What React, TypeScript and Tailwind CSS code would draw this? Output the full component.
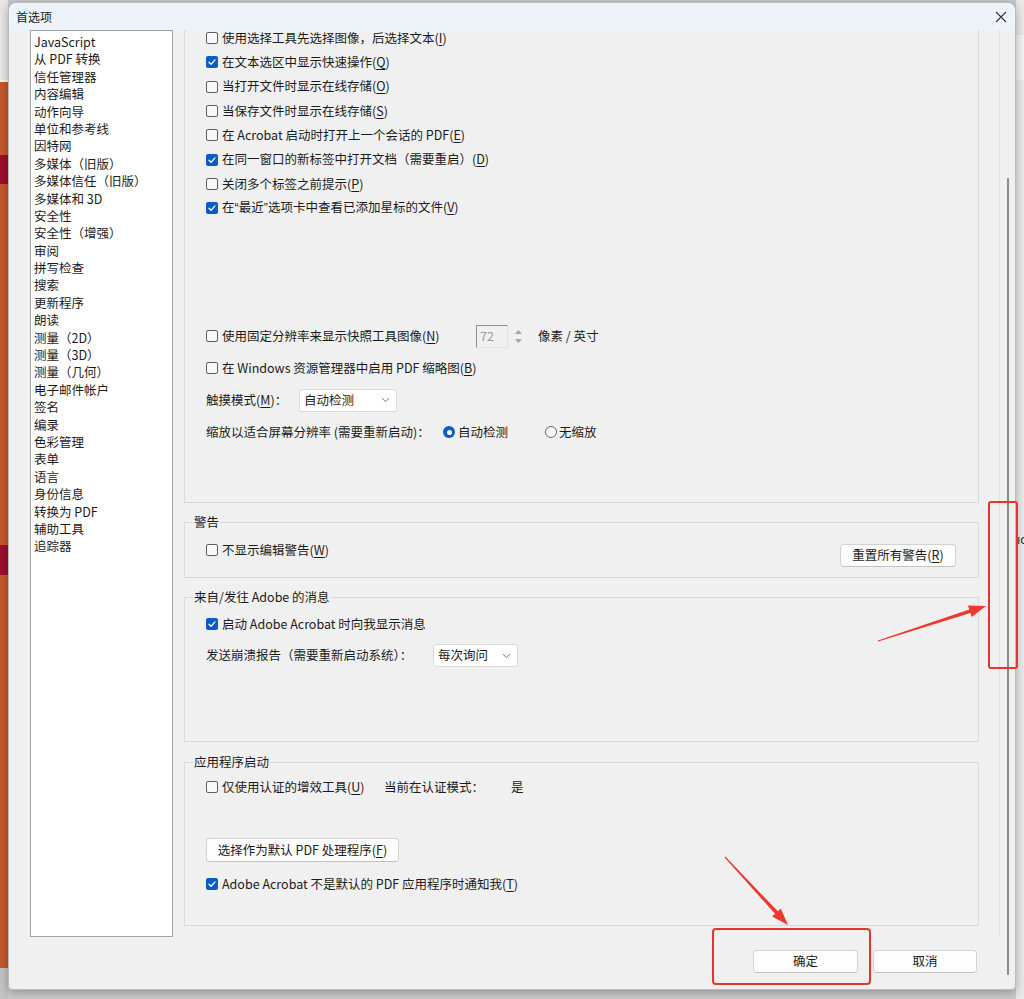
import type { ReactNode } from 'react'
import clsx from 'clsx'

const NAV = [
  'JavaScript',
  '从 PDF 转换',
  '信任管理器',
  '内容编辑',
  '动作向导',
  '单位和参考线',
  '因特网',
  '多媒体（旧版）',
  '多媒体信任（旧版）',
  '多媒体和 3D',
  '安全性',
  '安全性（增强）',
  '审阅',
  '拼写检查',
  '搜索',
  '更新程序',
  '朗读',
  '测量（2D）',
  '测量（3D）',
  '测量（几何）',
  '电子邮件帐户',
  '签名',
  '编录',
  '色彩管理',
  '表单',
  '语言',
  '身份信息',
  '转换为 PDF',
  '辅助工具',
  '追踪器',
]

const Q = ({ c }: { c: string }) => <span className="font-['Liberation_Sans',sans-serif]">{c}</span>

const TOP_OPTIONS: { label: ReactNode; key: string; checked: boolean }[] = [
  { label: '使用选择工具先选择图像，后选择文本', key: 'I', checked: false },
  { label: '在文本选区中显示快速操作', key: 'Q', checked: true },
  { label: '当打开文件时显示在线存储', key: 'O', checked: false },
  { label: '当保存文件时显示在线存储', key: 'S', checked: false },
  { label: '在 Acrobat 启动时打开上一个会话的 PDF', key: 'E', checked: false },
  { label: '在同一窗口的新标签中打开文档（需要重启）', key: 'D', checked: true },
  { label: '关闭多个标签之前提示', key: 'P', checked: false },
  {
    label: (
      <>
        在<Q c="“" />最近<Q c="”" />选项卡中查看已添加星标的文件
      </>
    ),
    key: 'V',
    checked: true,
  },
]

function Mn({ k }: { k: string }) {
  return (
    <>
      (<span className="underline underline-offset-2">{k}</span>)
    </>
  )
}

function Box({ checked }: { checked?: boolean }) {
  if (checked) {
    return (
      <span className="flex h-[12px] w-[12px] shrink-0 items-center justify-center rounded-[2px] bg-[#0b5cc4]">
        <svg width="10" height="10" viewBox="0 0 10 10" fill="none">
          <path d="M2 5.2 L4.1 7.2 L8 2.9" stroke="white" strokeWidth="1.3" strokeLinecap="round" strokeLinejoin="round" />
        </svg>
      </span>
    )
  }
  return <span className="h-[12px] w-[12px] shrink-0 rounded-[2px] border border-[#5e5e5e] bg-[#f8f8f8]" />
}

function Check({ checked, className, children }: { checked?: boolean; className?: string; children: ReactNode }) {
  return (
    <div className={clsx('flex items-center gap-[4px] whitespace-nowrap', className)}>
      <Box checked={checked} />
      <span>{children}</span>
    </div>
  )
}

function Radio({ on }: { on?: boolean }) {
  return on ? (
    <span className="flex h-[12px] w-[12px] shrink-0 items-center justify-center rounded-full bg-[#0b5cc4]">
      <span className="h-[5px] w-[5px] rounded-full bg-white" />
    </span>
  ) : (
    <span className="h-[12px] w-[12px] shrink-0 rounded-full border border-[#6a6a6a] bg-[#f8f8f8]" />
  )
}

function Chevron() {
  return (
    <svg width="9" height="6" viewBox="0 0 9 6" fill="none">
      <path d="M1 1.2 L4.5 4.6 L8 1.2" stroke="#7a7a7a" strokeWidth="1" />
    </svg>
  )
}

function Dropdown({ text, className }: { text: string; className: string }) {
  return (
    <div
      className={clsx(
        'flex h-[23px] items-center justify-between rounded-[3px] border border-[#dadada] bg-white pl-[4px] pr-[6px]',
        className,
      )}
    >
      <span>{text}</span>
      <Chevron />
    </div>
  )
}

function Button({ children, className }: { children: ReactNode; className?: string }) {
  return (
    <div
      className={clsx(
        'flex h-[23px] items-center justify-center rounded-[4px] border border-[#d2d2d2] border-b-[#c2c2c2] bg-[#fdfdfd] whitespace-nowrap',
        className,
      )}
    >
      {children}
    </div>
  )
}

function Group({ title, className, boxClass, children }: { title: string; className?: string; boxClass?: string; children: ReactNode }) {
  return (
    <div className={className}>
      <div className="relative z-10 ml-[9px] h-[18px] w-fit bg-[#f0f0f0] px-[1px] leading-[18px]">{title}</div>
      <div className={clsx('-mt-[9px] border border-[#d9d9d9] pl-[21px] pt-[8px]', boxClass)}>{children}</div>
    </div>
  )
}

function arrow(x1: number, y1: number, x2: number, y2: number) {
  const dx = x2 - x1
  const dy = y2 - y1
  const len = Math.hypot(dx, dy)
  const ux = dx / len
  const uy = dy / len
  const px = -uy
  const py = ux
  const head = 17
  const bx = x2 - ux * head
  const by = y2 - uy * head
  const pts = [
    [x1 + px * 0.6, y1 + py * 0.6],
    [bx + px * 1.8, by + py * 1.8],
    [bx + px * 6, by + py * 6],
    [x2, y2],
    [bx - px * 6, by - py * 6],
    [bx - px * 1.8, by - py * 1.8],
    [x1 - px * 0.6, y1 - py * 0.6],
  ]
  return pts.map((p) => p.map((n) => n.toFixed(1)).join(',')).join(' ')
}

export default function App() {
  return (
    <div className="relative flex h-[999px] w-[1024px] overflow-hidden bg-[#c9c9c9] font-['Noto_Sans_CJK_SC','Microsoft_YaHei',sans-serif] text-[12.5px] text-[#1b1b1b]">
      {/* desktop behind, left */}
      <div className="flex w-[8px] shrink-0 flex-col">
        <div className="h-[80px] bg-[#e7e7e7]" />
        <div className="h-[2px] bg-[#f4f4f4]" />
        <div className="h-[73px] bg-[#c4592b]" />
        <div className="h-[29px] bg-[#9c102d]" />
        <div className="h-[361px] bg-[#c4592b]" />
        <div className="h-[30px] bg-[#9c102d]" />
        <div className="h-[393px] bg-[#c4592b]" />
        <div className="flex-1 bg-[#c4c4c4]" />
      </div>

      {/* dialog */}
      <div className="relative z-10 mt-[2px] flex h-[988px] w-[1008px] shrink-0 flex-col rounded-t-[8px] rounded-b-[4px] border border-[#bcbcbc] bg-[#f0f0f0] shadow-[0_2px_10px_rgba(0,0,0,0.3)]">
        <div className="relative z-10 flex h-[27px] items-center justify-between rounded-t-[8px] bg-[#eef3f9] pl-[7px] pr-[8px]">
          <span className="text-[12px]">首选项</span>
          <svg width="12" height="12" viewBox="0 0 12 12" fill="none">
            <path d="M1 1 L11 11 M11 1 L1 11" stroke="#333" strokeWidth="1.1" />
          </svg>
        </div>

        <div className="flex h-[907px] pl-[21px]">
          <div className="h-[907px] w-[143px] shrink-0 border border-[#a3a3a3] bg-white pl-[3px] pt-[2px]">
            {NAV.map((item) => (
              <div key={item} className="h-[17.4px] whitespace-nowrap leading-[17.4px]">
                {item}
              </div>
            ))}
          </div>

          <div className="ml-[11px] flex w-[795px] shrink-0 flex-col">
            {/* top group, scrolled so its title is out of view */}
            <div className="h-[473px] border-x border-b border-[#d9d9d9]">
              <div className="-mt-[4px] pl-[21px]">
                {TOP_OPTIONS.map((o) => (
                  <Check key={o.key} checked={o.checked} className="h-[24.3px]">
                    {o.label}
                    <Mn k={o.key} />
                  </Check>
                ))}
                <div className="mt-[100px] flex h-[32px] items-center">
                  <Check className="w-[270px]">
                    使用固定分辨率来显示快照工具图像
                    <Mn k="N" />
                  </Check>
                  <div className="flex h-[23px] w-[32px] items-center border-l border-t border-[#8f8f8f] border-r-[#e3e3e3] border-b-[#e3e3e3] border-r border-b pl-[3px] text-[#9a9a9a]">
                    72
                  </div>
                  <div className="ml-[5px] flex w-[10px] flex-col items-center gap-[5px]">
                    <svg width="7" height="4" viewBox="0 0 7 4">
                      <path d="M0 4 L3.5 0 L7 4 Z" fill="#a5a5a5" />
                    </svg>
                    <svg width="7" height="4" viewBox="0 0 7 4">
                      <path d="M0 0 L3.5 4 L7 0 Z" fill="#a5a5a5" />
                    </svg>
                  </div>
                  <span className="ml-[15px]">像素 / 英寸</span>
                </div>
                <Check className="h-[32px]">
                  在 Windows 资源管理器中启用 PDF 缩略图
                  <Mn k="B" />
                </Check>
                <div className="flex h-[32px] items-center">
                  <span className="w-[93px] whitespace-nowrap">
                    触摸模式<Mn k="M" />：
                  </span>
                  <Dropdown text="自动检测" className="w-[98px]" />
                </div>
                <div className="flex h-[32px] items-center">
                  <span className="w-[237px] whitespace-nowrap">缩放以适合屏幕分辨率 (需要重新启动)：</span>
                  <div className="flex w-[102px] items-center gap-[3px]">
                    <Radio on />
                    <span>自动检测</span>
                  </div>
                  <div className="flex items-center gap-[2px]">
                    <Radio />
                    <span>无缩放</span>
                  </div>
                </div>
              </div>
            </div>

            <Group title="警告" className="mt-[10px]" boxClass="flex items-start justify-between pb-[10px] pr-[22px]">
              <Check className="mt-[10px] h-[18px]">
                不显示编辑警告
                <Mn k="W" />
              </Check>
              <Button className="mt-[13px] w-[116px]">
                重置所有警告
                <Mn k="R" />
              </Button>
            </Group>

            <Group title="来自/发往 Adobe 的消息" className="mt-[10px]" boxClass="pb-[74px]">
              <Check checked className="mt-[9px] h-[18px]">
                启动 Adobe Acrobat 时向我显示消息
              </Check>
              <div className="mt-[11px] flex h-[23px] items-center">
                <span className="w-[227px] whitespace-nowrap">发送崩溃报告（需要重新启动系统）：</span>
                <Dropdown text="每次询问" className="w-[85px]" />
              </div>
            </Group>

            <Group title="应用程序启动" className="mt-[11px]" boxClass="pb-[32px]">
              <div className="mt-[7px] flex h-[18px] items-center">
                <Check className="w-[178px]">
                  仅使用认证的增效工具
                  <Mn k="U" />
                </Check>
                <span className="w-[127px]">当前在认证模式：</span>
                <span>是</span>
              </div>
              <Button className="mt-[42px] h-[24px] w-[193px]">
                选择作为默认 PDF 处理程序
                <Mn k="F" />
              </Button>
              <Check checked className="mt-[13px] h-[18px]">
                Adobe Acrobat 不是默认的 PDF 应用程序时通知我
                <Mn k="T" />
              </Check>
            </Group>
          </div>

          <div className="w-[21px] shrink-0 border-r border-[#e2e2e2]" />
        </div>

        <div className="mt-[13px] flex justify-end gap-[15px] pr-[38px]">
          <Button className="w-[105px] border-[#3c80b8] border-b-[#3c80b8]">确定</Button>
          <Button className="w-[104px]">取消</Button>
        </div>

        {/* overlay scrollbar */}
        <div className="absolute right-[6px] top-[175px] h-[797px] w-[2px] rounded-full bg-[#8a8a8a]" />
      </div>

      {/* desktop behind, right */}
      <div className="flex w-[8px] shrink-0 flex-col bg-[#e9e9e9]">
        <div className="h-[35px]" />
        <div className="h-[45px] bg-[#f3f3f3]" />
        <div className="mt-[451px] overflow-hidden whitespace-nowrap pl-[1px] text-[12px] leading-[16px] text-[#333]">ıc</div>
      </div>

      {/* red annotations */}
      <svg className="pointer-events-none absolute left-0 top-0 z-20" width={1024} height={999}>
        <rect x={989} y={502} width={28} height={166} rx={2} fill="none" stroke="#e8342b" strokeWidth={2} />
        <rect x={713} y={929} width={157} height={55} rx={3} fill="none" stroke="#e8342b" strokeWidth={2} />
        <polygon points={arrow(878, 641, 986, 606)} fill="#ee3a2e" />
        <polygon points={arrow(725, 857, 788, 925)} fill="#ee3a2e" />
      </svg>
    </div>
  )
}
